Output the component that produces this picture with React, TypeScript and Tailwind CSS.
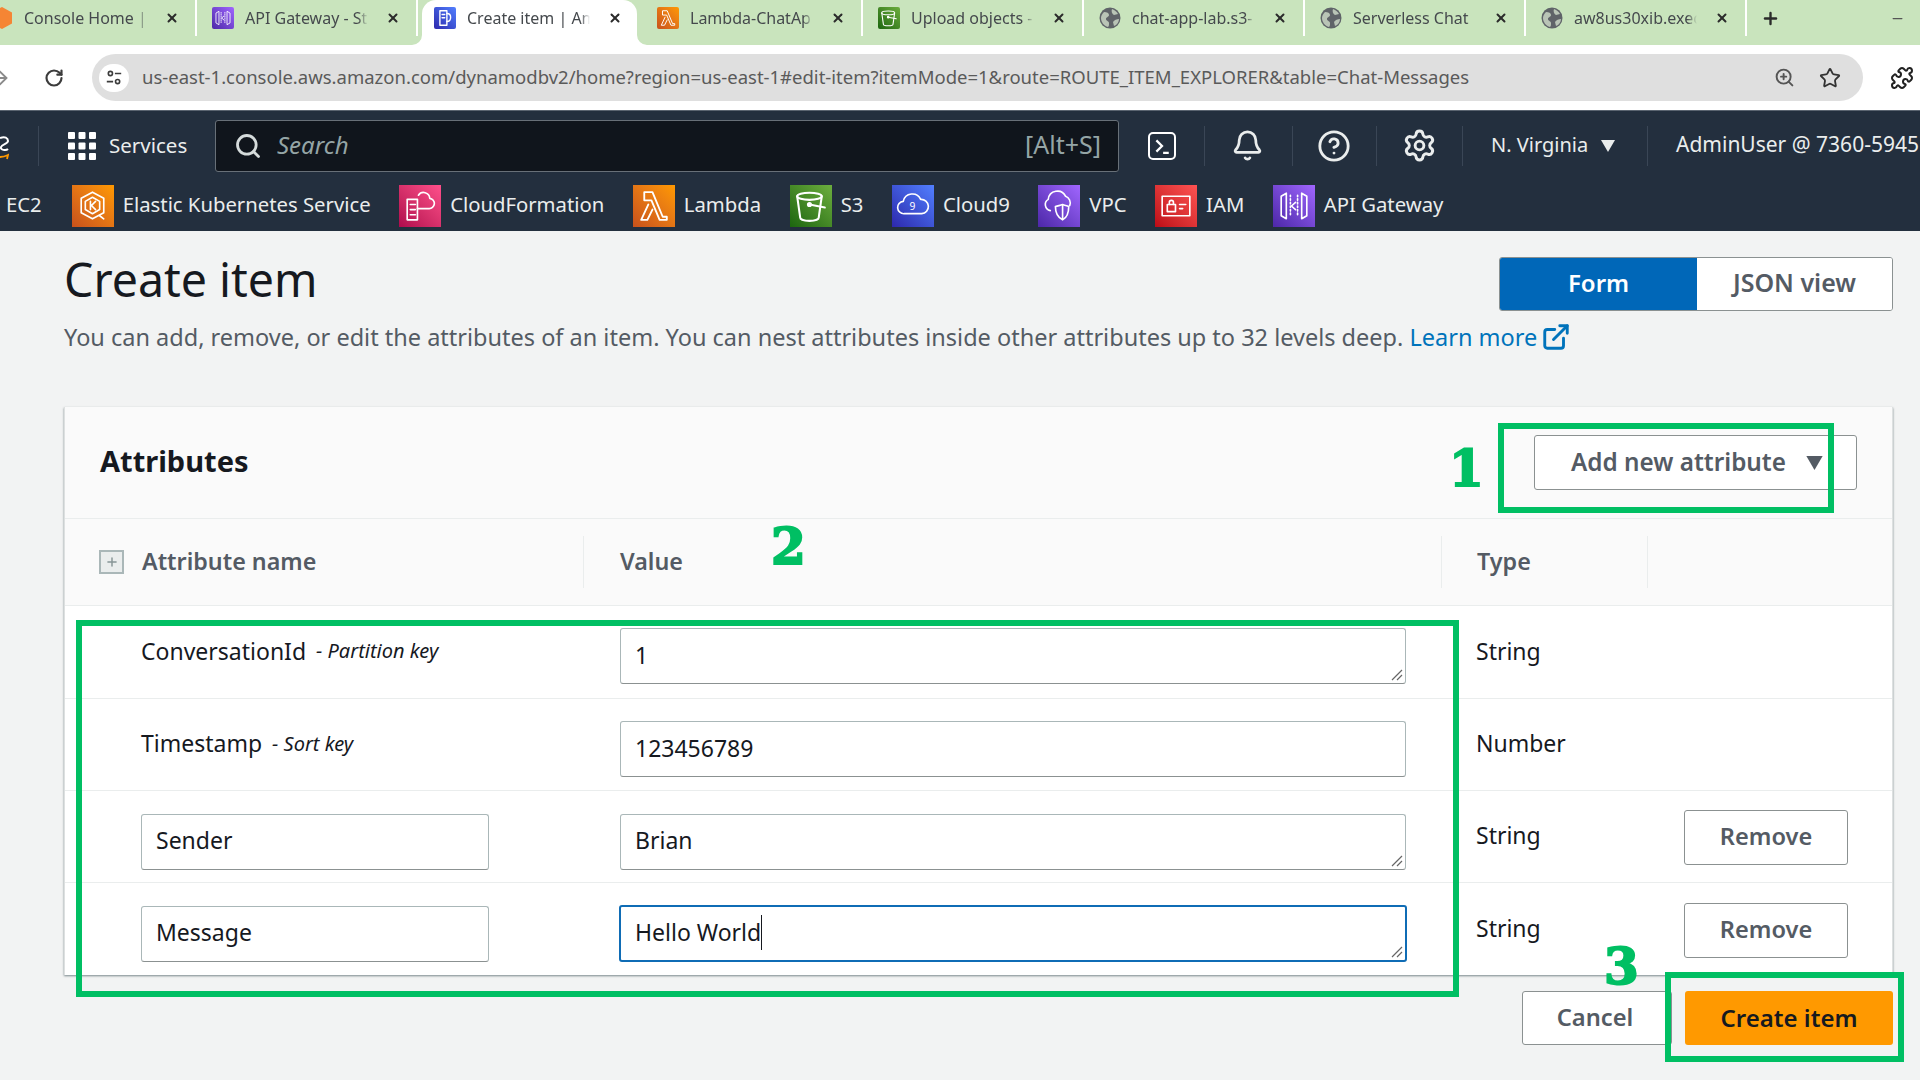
import React from "react";
import { ArrowRight, RotateCw, ZoomIn, Star, Puzzle, X, Plus, Search, Bell, CircleHelp, Settings, ExternalLink, Minus } from "lucide-react";

const FONT = "font-['Noto_Sans',sans-serif]";

function Glyph({ name }: { name: string }) {
  const c = { fill: "none", stroke: "currentColor", strokeWidth: 1.6, strokeLinejoin: "round" as const, strokeLinecap: "round" as const };
  switch (name) {
    case "ddb":
      return (<g {...c} strokeWidth={2.6}><path d="M11 7h13v27H11z" /><path d="M15 14h5M15 20h5" /><path d="M24 12c5 0 7 3 7 7s-2 8-7 8" /></g>);
    case "eks":
      return (<g {...c}><path d="M20 7 31 13v14l-11 6-11-6V13z" /><path d="M20 12 27 16v8l-7 4-7-4v-8z" /><path d="M18 16v8M23 16l-4 4 4 4" /><path d="M27 30l4 3" /></g>);
    case "cfn":
      return (<g {...c}><path d="M8 14h10v20H8z" /><path d="M11 19h5M11 24h5M11 29h5" /><path d="M18 23h11a5 5 0 0 0 1-10 6 6 0 0 0-11-3" /></g>);
    case "lambda":
      return (<g {...c} strokeWidth={1.8}><path d="M11 7h8l10 24h4v3h-7L18 15h-7z" /><path d="M15 19 8 34h6l5-10" /></g>);
    case "s3":
      return (<g {...c} strokeWidth={2}><ellipse cx="19" cy="11" rx="12" ry="3.5" /><path d="M7 11l3 21a9 3 0 0 0 18 0l3-21" /><path d="M19 19l15 3" /><circle cx="19" cy="19" r="1.5" /></g>);
    case "c9":
      return (<g {...c}><path d="M12 28a6 6 0 0 1-1-12 9 9 0 0 1 17-2 7 7 0 0 1 1 14z" /><text x="20" y="24" textAnchor="middle" fontSize="10" fill="currentColor" stroke="none" fontFamily="Noto Sans">9</text></g>);
    case "vpc":
      return (<g {...c}><path d="M12 25a6 6 0 0 1-2-11 9 9 0 0 1 17-3 7 7 0 0 1 4 9" /><path d="M17 21c3-1 5-1 7-2 2 1 4 1 6 2 0 6-2 11-6 13-4-2-7-7-7-13z" /><path d="M24 20v13" /></g>);
    case "iam":
      return (<g {...c}><rect x="7" y="11" width="27" height="19" /><rect x="12" y="19" width="8" height="7" /><path d="M14 19v-2a2 2 0 0 1 4 0v2M24 19h6M24 23h3" /></g>);
    case "api":
      return (<g {...c}><path d="M8 11l5-3v25l-5-3zM33 11l-5-3v25l5-3z" /><path d="M17 10v21M24 10v21" strokeDasharray="1.5 2" /><path d="M22 17l-4 3.500 4 3.500" /></g>);
    default:
      return null;
  }
}

function SvcIcon({ name, bg, className }: { name: string; bg: string; className: string }) {
  return (
    <span className={`${bg} ${className} flex shrink-0 items-center justify-center text-white`}>
      <svg viewBox="0 0 41 41" className="h-full w-full"><Glyph name={name} /></svg>
    </span>
  );
}

const ORANGE = "bg-linear-to-tr from-[#c8511b] to-[#ff9900]";
const PINK = "bg-linear-to-tr from-[#b0084d] to-[#ff4f8b]";
const GREEN = "bg-linear-to-tr from-[#1b660f] to-[#6cae3e]";
const BLUE = "bg-linear-to-tr from-[#2e27ad] to-[#527fff]";
const PURPLE = "bg-linear-to-tr from-[#4d27a8] to-[#a166ff]";
const RED = "bg-linear-to-tr from-[#bd0816] to-[#ff5252]";

const tabs: { title: string; icon?: string; bg?: string; globe?: boolean; cube?: boolean; active?: boolean }[] = [
  { title: "Console Home |", cube: true },
  { title: "API Gateway - St", icon: "api", bg: PURPLE },
  { title: "Create item | Am", icon: "ddb", bg: BLUE, active: true },
  { title: "Lambda-ChatAp", icon: "lambda", bg: ORANGE },
  { title: "Upload objects -", icon: "s3", bg: GREEN },
  { title: "chat-app-lab.s3-", globe: true },
  { title: "Serverless Chat", globe: true },
  { title: "aw8us30xib.exec", globe: true },
];

function GlobeIcon() {
  return (
    <svg viewBox="0 0 22 22" className="h-[22px] w-[22px]">
      <circle cx="11" cy="11" r="10.500" fill="#5f6368" />
      <path d="M5 5c3 0 5 1 5 3s-3 2-3 4 3 2 3 4 0 3-1 4c-4-1-7-5-7-9 0-2 1-4 3-6zM13 2c3 1 5 3 6 5l-4 1c-2-1-3-4-2-6zM20 12c0 3-2 6-5 7l-1-4c1-2 4-3 6-3z" fill="#b9c4b6" />
    </svg>
  );
}

function Tab({ t }: { t: (typeof tabs)[number] }) {
  const inner = (
    <>
      <span className="flex w-[22px] shrink-0 items-center justify-center">
        {t.globe ? (
          <GlobeIcon />
        ) : t.cube ? (
          <svg viewBox="0 0 22 22" className="h-[22px] w-[22px]"><path d="M11 0 21 5.500v11L11 22 1 16.500v-11z" fill="#f58534" /></svg>
        ) : (
          <SvcIcon name={t.icon!} bg={t.bg!} className="h-[22px] w-[22px] rounded-[2px]" />
        )}
      </span>
      <span className="ml-[11px] w-[123px] whitespace-nowrap text-[16px] text-[#45494d] [mask-image:linear-gradient(to_right,black_92%,transparent)]">
        {t.title}
      </span>
      <X size={14} strokeWidth={3.4} className="ml-[18px] shrink-0 text-[#2b2b2b]" />
    </>
  );
  if (t.active) {
    return (
      <div className="flex w-[224px] shrink-0 px-[4px]">
        <div className="relative flex h-[45px] w-[215px] items-start rounded-t-[14px] bg-white pl-[12px] pt-[7px]">
          <span className="flex h-[22px] items-center">{inner}</span>
          <svg viewBox="0 0 10 10" className="absolute bottom-0 left-[-10px] h-[10px] w-[10px]"><path d="M10 0v10H0a10 10 0 0 0 10-10z" fill="#fff" /></svg>
          <svg viewBox="0 0 10 10" className="absolute bottom-0 right-[-10px] h-[10px] w-[10px]"><path d="M0 0v10H10A10 10 0 0 1 0 0z" fill="#fff" /></svg>
        </div>
      </div>
    );
  }
  return (
    <div className="flex h-[36px] w-[221px] shrink-0 items-center border-r-2 border-white pl-[15px]">
      {inner}
    </div>
  );
}

function TabStrip() {
  return (
    <div className="flex h-[45px] w-[1920px] overflow-hidden bg-[#c9e4bd]">
      <div className="-ml-[24px] flex shrink-0">
        {tabs.map((t) => (
          <Tab key={t.title} t={t} />
        ))}
      </div>
      <div className="ml-[14px] flex h-[36px] items-center">
        <Plus size={19} strokeWidth={3} className="text-[#2b2b2b]" />
      </div>
      <div className="ml-[110px] flex h-[36px] items-center">
        <Minus size={15} className="text-[#555]" />
      </div>
    </div>
  );
}

function AddressBar() {
  return (
    <div className="flex h-[65px] w-[1920px] items-center bg-white">
      <ArrowRight size={22} strokeWidth={2} className="-ml-[11px] shrink-0 text-[#8a8a8a]" />
      <RotateCw size={20} strokeWidth={2.6} className="ml-[33px] shrink-0 text-[#3c3c3c]" />
      <div className="ml-[28px] flex h-[47px] w-[1771px] shrink-0 items-center rounded-full bg-[#dfdfdf] pl-[7px]">
        <span className="flex h-[28px] w-[30px] items-center justify-center rounded-full bg-white">
          <svg viewBox="0 0 20 20" className="h-[18px] w-[18px]" fill="none" stroke="#3c3c3c" strokeWidth="1.8"><circle cx="6" cy="5" r="2.300" /><path d="M11 5h7M2 14h7" /><circle cx="14" cy="14" r="2.300" /></svg>
        </span>
        <span className="ml-[13px] whitespace-nowrap pb-[1px] text-[18.5px] text-[#5a5a5a]">
          us-east-1.console.aws.amazon.com/dynamodbv2/home?region=us-east-1#edit-item?itemMode=1&amp;route=ROUTE_ITEM_EXPLORER&amp;table=Chat-Messages
        </span>
        <ZoomIn size={21} strokeWidth={2.2} className="ml-auto text-[#555]" />
        <Star size={22} strokeWidth={2} className="ml-[24px] mr-[22px] text-[#333]" />
      </div>
      <Puzzle size={24} strokeWidth={2} className="ml-[27px] shrink-0 text-[#222]" />
    </div>
  );
}

const services = [
  { name: "eks", label: "Elastic Kubernetes Service", bg: ORANGE },
  { name: "cfn", label: "CloudFormation", bg: PINK },
  { name: "lambda", label: "Lambda", bg: ORANGE },
  { name: "s3", label: "S3", bg: GREEN },
  { name: "c9", label: "Cloud9", bg: BLUE },
  { name: "vpc", label: "VPC", bg: PURPLE },
  { name: "iam", label: "IAM", bg: RED },
  { name: "api", label: "API Gateway", bg: PURPLE },
];

const Sep = ({ className }: { className: string }) => <span className={`h-[40px] w-px shrink-0 bg-[#3a4656] ${className}`} />;

function AwsNav() {
  return (
    <div className="w-[1920px] overflow-hidden border-t border-[#5a6470] bg-[#232f3e] text-white">
      <div className="flex h-[69px] items-center">
        <svg viewBox="0 0 9 40" className="h-[40px] w-[9px] shrink-0" fill="none">
          <path d="M0 12c5-2 8 0 8 3s-6 3-7 6 5 4 7 2" stroke="#fff" strokeWidth="2" />
          <path d="M0 31c3 0 6-1 8-2l-1 4" stroke="#ff9900" strokeWidth="1.800" />
        </svg>
        <Sep className="ml-[29px]" />
        <svg viewBox="0 0 28 28" className="ml-[29px] h-[28px] w-[28px] shrink-0" fill="#fff">
          {[0, 10.500, 21].flatMap((y) => [0, 10.500, 21].map((x) => <rect key={`${x}-${y}`} x={x} y={y} width="7" height="7" rx="1" />))}
        </svg>
        <span className="ml-[13px] w-[78px] shrink-0 pb-[1px] text-[20.5px] text-[#eaeded]">Services</span>
        <div className="ml-[28px] flex h-[52px] w-[904px] shrink-0 items-center rounded-[3px] border border-[#687078] bg-[#10151c] pl-[18px] pr-[17px]">
          <Search size={28} strokeWidth={2.4} className="text-[#d5dbdb]" />
          <span className="ml-[15px] pb-[2px] text-[24px] italic text-[#95a5a6]">Search</span>
          <span className="ml-auto pb-[2px] text-[25px] text-[#95a5a6]">[Alt+S]</span>
        </div>
        <span className="ml-[29px] flex h-[28px] w-[28px] shrink-0 items-center justify-center rounded-[5px] border-[2.500px] border-white">
          <svg viewBox="0 0 16 16" className="h-[18px] w-[18px]" fill="none" stroke="#fff" strokeWidth="2"><path d="M3 3l5 5-5 5M9 14h5" /></svg>
        </span>
        <Sep className="ml-[28px]" />
        <Bell size={33} strokeWidth={2} className="ml-[26px] shrink-0 text-[#eaeded]" />
        <Sep className="ml-[28px]" />
        <CircleHelp size={34} strokeWidth={2} className="ml-[24px] shrink-0 text-[#eaeded]" />
        <Sep className="ml-[25px]" />
        <Settings size={35} strokeWidth={2} className="ml-[25px] shrink-0 text-[#eaeded]" />
        <Sep className="ml-[25px]" />
        <span className="ml-[28px] w-[98px] shrink-0 whitespace-nowrap pb-[2px] text-[20px] text-[#eaeded]">N. Virginia</span>
        <svg viewBox="0 0 14 12" className="ml-[12px] h-[12px] w-[14px] shrink-0" fill="#eaeded"><path d="M0 0h14L7 12z" /></svg>
        <Sep className="ml-[32px]" />
        <span className="ml-[28px] shrink-0 whitespace-nowrap pb-[2px] text-[21px] text-[#eaeded]">AdminUser @ 7360-5945</span>
      </div>
      <div className="flex h-[51px] items-center whitespace-nowrap pl-[6px]">
        <span className="pb-[2px] text-[20.3px] text-[#eaeded]">EC2</span>
        <div className="ml-[30px] flex items-center gap-[28.5px]">
          {services.map((s) => (
            <div key={s.label} className="flex items-center gap-[9px]">
              <SvcIcon name={s.name} bg={s.bg} className="h-[42px] w-[42px]" />
              <span className="pb-[2px] text-[20.3px] text-[#eaeded]">{s.label}</span>
            </div>
          ))}
        </div>
      </div>
    </div>
  );
}

function Field({ value, grip, focus, caret, className }: { value: string; grip?: boolean; focus?: boolean; caret?: boolean; className: string }) {
  return (
    <div
      className={`relative flex items-center rounded-[3px] bg-white pl-[14px] text-[23px] text-[#16191f] ${
        focus ? "border-[2px] border-[#0f6cb5]" : "border border-[#aab7b8] border-b-[#8b9191]"
      } ${className}`}
    >
      <span className={caret ? "border-r border-[#16191f]" : ""}>{value}</span>
      {grip && (
        <svg viewBox="0 0 12 12" className="absolute bottom-[2px] right-[2px] h-[12px] w-[12px]" stroke="#666" strokeWidth="1.200"><path d="M1 11 11 1M6 11l5-5" /></svg>
      )}
    </div>
  );
}

const RemoveBtn = () => (
  <button className="ml-[37px] h-[55px] w-[164px] rounded-[3px] border border-[#8b9191] bg-white pb-[2px] text-[23.6px] font-semibold text-[#545b64]">Remove</button>
);

const COLS = "grid-cols-[518px_858px_206px_1fr]";
const TEXT_CELL = "flex items-center pb-[2px] pl-[35px] text-[23px] text-[#16191f]";

function Table() {
  return (
    <div>
      <div className={`grid h-[88px] ${COLS} items-center border-y border-[#eaeded] bg-[#fafafa] text-[23.3px] font-semibold text-[#545b64]`}>
        <div className="flex items-center pl-[34px]">
          <span className="flex h-[24px] w-[25px] items-center justify-center border-2 border-[#aab7b8] bg-[#eaeded]">
            <Plus size={14} strokeWidth={2.5} className="text-[#879596]" />
          </span>
          <span className="ml-[18px] pb-[2px]">Attribute name</span>
        </div>
        <div className="flex h-[52px] items-center border-l border-[#eaeded] pb-[2px] pl-[36px]">Value</div>
        <div className="flex h-[52px] items-center border-l border-[#eaeded] pb-[2px] pl-[35px]">Type</div>
        <div className="h-[52px] border-l border-[#eaeded]" />
      </div>
      <div className={`grid h-[93px] ${COLS} border-b border-[#eaeded]`}>
        <div className="flex items-center pb-[2px] pl-[76px] text-[23px] text-[#16191f]">ConversationId<i className="ml-[10px] text-[20px]">- Partition key</i></div>
        <div className="pl-[37px] pt-[22px]"><Field value="1" grip className="h-[56px] w-[786px] pb-[2px]" /></div>
        <div className={TEXT_CELL}>String</div>
        <div />
      </div>
      <div className={`grid h-[92px] ${COLS} border-b border-[#eaeded]`}>
        <div className="flex items-center pb-[2px] pl-[76px] text-[23px] text-[#16191f]">Timestamp<i className="ml-[10px] text-[20px]">- Sort key</i></div>
        <div className="pl-[37px] pt-[22px]"><Field value="123456789" className="h-[56px] w-[786px] pb-[2px]" /></div>
        <div className={TEXT_CELL}>Number</div>
        <div />
      </div>
      <div className={`grid h-[92px] ${COLS} border-b border-[#eaeded]`}>
        <div className="pl-[76px] pt-[23px]"><Field value="Sender" className="h-[56px] w-[348px] pb-[3px]" /></div>
        <div className="pl-[37px] pt-[23px]"><Field value="Brian" grip className="h-[56px] w-[786px] pb-[4px]" /></div>
        <div className={TEXT_CELL}>String</div>
        <div className="pt-[19px]"><RemoveBtn /></div>
      </div>
      <div className={`grid h-[92px] ${COLS}`}>
        <div className="pl-[76px] pt-[23px]"><Field value="Message" className="h-[56px] w-[348px] pb-[3px]" /></div>
        <div className="pl-[36px] pt-[22px]"><Field value="Hello World" grip focus caret className="h-[57px] w-[788px] pb-[2px]" /></div>
        <div className={TEXT_CELL}>String</div>
        <div className="pt-[20px]"><RemoveBtn /></div>
      </div>
    </div>
  );
}

const NUM = "absolute font-['DejaVu_Serif',serif] text-[50px] font-bold leading-[60px] text-[#00bf63] [-webkit-text-stroke:2px_#00bf63]";

function Main() {
  return (
    <div className="relative h-[849px] w-[1920px] bg-[#f2f3f3] pl-[64px] pr-[27px]">
      <div className="flex h-[176px]">
        <div className="w-0 flex-1">
          <h1 className="pt-[18px] text-[46.5px] leading-[60px] text-[#16191f]">Create item</h1>
          <p className="mt-[12px] whitespace-nowrap text-[23.5px] leading-[32px] text-[#545b64]">
            You can add, remove, or edit the attributes of an item. You can nest attributes inside other attributes up to 32 levels deep.{" "}
            <span className="text-[#0073bb]">Learn more</span>
            <ExternalLink size={30} strokeWidth={2.3} className="ml-[4px] inline-block align-[-6px] text-[#0073bb]" />
          </p>
        </div>
        <div className="flex shrink-0 pt-[26px]">
          <div className="flex h-[54px] overflow-hidden rounded-[3px] border border-[#8b9191] font-semibold">
            <span className="flex w-[197px] items-center justify-center bg-[#0067b8] pb-[2px] text-[24px] text-white">Form</span>
            <span className="flex w-[195px] items-center justify-center bg-white pb-[2px] text-[25px] text-[#545b64]">JSON view</span>
          </div>
        </div>
      </div>
      <div className="border-x border-[#dde0e0] bg-white shadow-[0_1px_2px_rgba(0,28,36,0.5)]">
        <div className="flex h-[111px] items-start justify-between bg-[#fafafa] pl-[35px] pr-[35px]">
          <h2 className="pt-[32px] text-[29px] font-bold text-[#16191f]">Attributes</h2>
          <button className="mt-[28px] flex h-[55px] w-[323px] items-center rounded-[3px] border border-[#8b9191] bg-white pl-[36px] text-[24.3px] font-semibold text-[#545b64]">
            Add new attribute
            <svg viewBox="0 0 14 12" className="ml-[19px] h-[14px] w-[19px]" fill="#545b64"><path d="M0 0h14L7 12z" /></svg>
          </button>
        </div>
        <Table />
      </div>
      <div className="mt-[16px] flex justify-end gap-[13px]">
        <button className="h-[54px] w-[150px] rounded-[3px] border border-[#8b9191] bg-white pr-[4px] text-[23.7px] font-semibold text-[#545b64]">Cancel</button>
        <button className="h-[54px] w-[208px] rounded-[3px] bg-[#ff9900] text-[24px] font-semibold text-[#16191f]">Create item</button>
      </div>

      {/* annotations drawn over the screenshot */}
      <div className="absolute left-[1498px] top-[192px] h-[90px] w-[336px] border-[6px] border-[#00bf63]" />
      <div className="absolute left-[76px] top-[389px] h-[377px] w-[1383px] border-[6px] border-[#00bf63]" />
      <div className="absolute left-[1665px] top-[741px] h-[90px] w-[239px] border-[6px] border-[#00bf63]" />
      <span className={`${NUM} left-[1449px] top-[208px]`}>1</span>
      <span className={`${NUM} left-[771px] top-[286px]`}>2</span>
      <span className={`${NUM} left-[1604px] top-[706px]`}>3</span>
    </div>
  );
}

export default function App() {
  return (
    <div className={`h-[1080px] w-[1920px] overflow-hidden ${FONT}`}>
      <TabStrip />
      <AddressBar />
      <AwsNav />
      <Main />
    </div>
  );
}
